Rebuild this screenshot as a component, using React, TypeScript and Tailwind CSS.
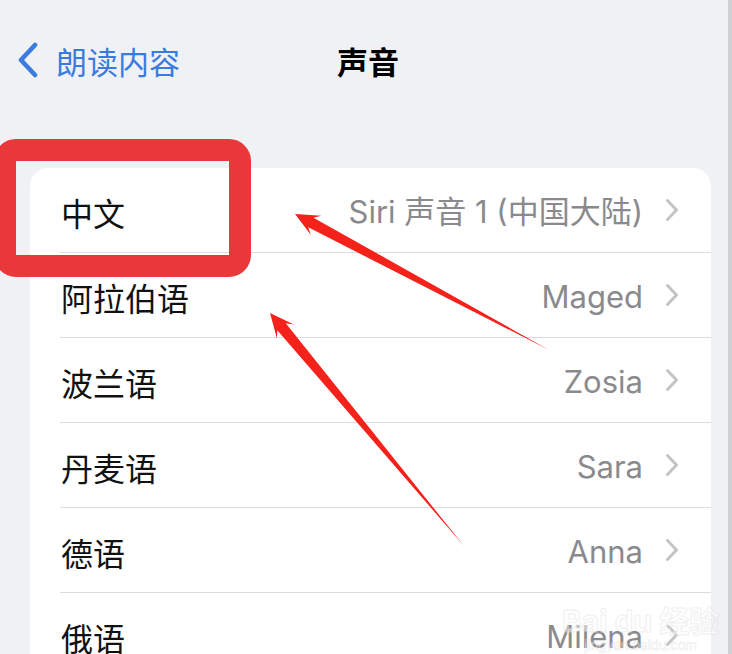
import React from "react";

const rows: { label: string; value: string }[] = [
  { label: "中文", value: "Siri 声音 1 (中国大陆)" },
  { label: "阿拉伯语", value: "Maged" },
  { label: "波兰语", value: "Zosia" },
  { label: "丹麦语", value: "Sara" },
  { label: "德语", value: "Anna" },
  { label: "俄语", value: "Milena" },
];

function arrowPoints(tx: number, ty: number, ex: number, ey: number, headLen: number, headHalf: number, shaftHalf: number) {
  const dx = ex - tx;
  const dy = ey - ty;
  const len = Math.hypot(dx, dy);
  const ux = dx / len;
  const uy = dy / len;
  const px = -uy;
  const py = ux;
  const bx = tx + ux * headLen;
  const by = ty + uy * headLen;
  const nx = tx + ux * (headLen * 0.75);
  const ny = ty + uy * (headLen * 0.75);
  const pts = [
    [tx, ty],
    [bx + px * headHalf, by + py * headHalf],
    [nx + px * shaftHalf, ny + py * shaftHalf],
    [ex, ey],
    [nx - px * shaftHalf, ny - py * shaftHalf],
    [bx - px * headHalf, by - py * headHalf],
  ];
  return pts.map((p) => p.join(",")).join(" ");
}

const cjk = { fontFamily: '"Noto Sans CJK SC", "Noto Sans", sans-serif' };
const val = { fontFamily: 'Inter, "Noto Sans CJK SC", sans-serif' };

export default function App() {
  return (
    <div className="relative flex h-[654px] w-[732px] overflow-hidden bg-[#f0f1f5]">
      <div className="flex w-[728px] shrink-0 flex-col">
        <div className="grid h-[120px] shrink-0 grid-cols-[1fr_auto_1fr] items-center">
          <div className="flex items-center pl-[17px]">
            <svg width="22" height="36" viewBox="0 0 22 36" className="mr-[17px]">
              <path d="M18 3 L4 18 L18 33" fill="none" stroke="#3a7be0" strokeWidth="4.6" strokeLinecap="round" strokeLinejoin="round" />
            </svg>
            <span className="text-[31px] leading-none text-[#3a7be0]" style={cjk}>朗读内容</span>
          </div>
          <div className="pl-[8px] text-[31px] font-bold leading-none text-black" style={cjk}>声音</div>
          <div />
        </div>
        <div className="mt-[48px] ml-[30px] w-[681px] shrink-0 rounded-t-[18px] bg-white">
          {rows.map((r) => (
            <div key={r.label} className="pl-[30px]">
              <div className="flex h-[85px] items-center justify-between border-b border-[#dcdcdf] pr-[32px]">
                <span className="pl-[1px] pt-[3px] text-[32px] leading-none text-[#111]" style={cjk}>{r.label}</span>
                <div className="flex items-center">
                  <span className="pt-[3px] text-[31px] leading-none text-[#8a8a8e]" style={val}>{r.value}</span>
                  <svg width="14" height="24" viewBox="0 0 14 24" className="ml-[22px]">
                    <path d="M2.5 2.5 L11.5 12 L2.5 21.5" fill="none" stroke="#c4c4c7" strokeWidth="3" strokeLinecap="round" strokeLinejoin="round" />
                  </svg>
                </div>
              </div>
            </div>
          ))}
        </div>
      </div>
      <div className="w-[4px] shrink-0 bg-[#cfd0d4]" />

      <div className="pointer-events-none absolute left-[-6px] top-[139px] h-[138px] w-[257px] rounded-[22px] border-[22px] border-[#e8383a]" />

      <svg className="pointer-events-none absolute left-0 top-0" width="732" height="654">
        <polygon points={arrowPoints(295, 214, 549, 350, 24, 11, 5.5)} fill="#f5221b" />
        <polygon points={arrowPoints(270, 313, 464, 546, 24, 11, 5.5)} fill="#f5221b" />
      </svg>

      <div className="pointer-events-none absolute left-[562px] top-[606px] flex flex-col items-center opacity-50">
        <div className="text-[30px] font-bold leading-none text-white" style={{ fontFamily: 'Inter, "Noto Sans CJK SC", sans-serif', WebkitTextStroke: "1px #e2e2e2" }}>Bai du 经验</div>
        <div className="mt-[3px] text-[13px] leading-none text-white" style={{ fontFamily: 'Inter, sans-serif', WebkitTextStroke: "0.5px #d8d8d8" }}>jingyan.baidu.com</div>
      </div>
    </div>
  );
}
